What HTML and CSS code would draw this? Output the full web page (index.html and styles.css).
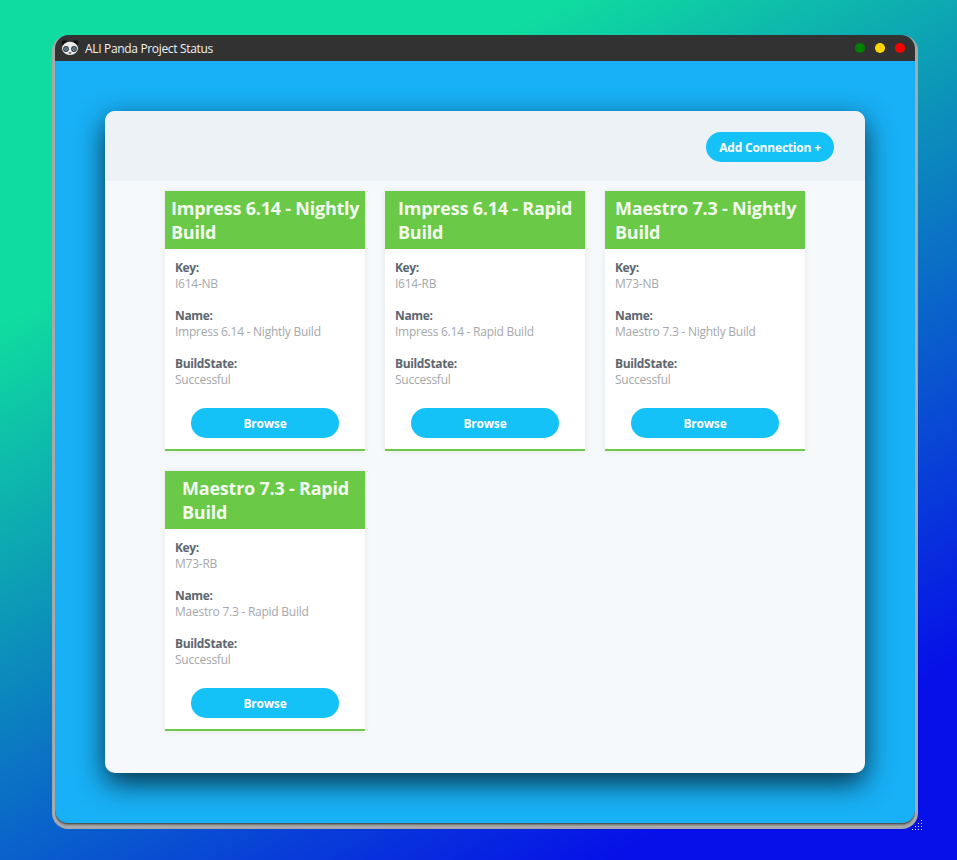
FILE: index.html
```html
<!DOCTYPE html>
<html lang="en">
<head>
    <meta charset="UTF-8">
    <meta name="viewport" content="width=device-width, initial-scale=1.0">
    <title>ALI Panda Project Status</title>
    <link rel="stylesheet" href="styles.css">
</head>
<body>

<div class="window">
    <div class="title-bar">
        <svg class="panda" width="18" height="16" viewBox="0 0 18 16">
            <circle cx="3.5" cy="3" r="2.8" fill="#111"/>
            <circle cx="14.5" cy="3" r="2.8" fill="#111"/>
            <ellipse cx="9" cy="8.3" rx="8" ry="6.6" fill="#ececec"/>
            <circle cx="5" cy="9" r="2.9" fill="#2d3a42"/>
            <circle cx="13" cy="9" r="2.9" fill="#2d3a42"/>
            <circle cx="5" cy="9" r="1.7" fill="#8fb4c8"/>
            <circle cx="13" cy="9" r="1.7" fill="#8fb4c8"/>
            <circle cx="5" cy="9" r=".8" fill="#111"/>
            <circle cx="13" cy="9" r=".8" fill="#111"/>
            <ellipse cx="9" cy="13" rx="1.5" ry=".9" fill="#777"/>
        </svg>
        <span class="window-title">ALI Panda Project Status</span>
        <div class="dots">
            <span class="dot dot-green"></span>
            <span class="dot dot-yellow"></span>
            <span class="dot dot-red"></span>
        </div>
    </div>
    <div class="window-body">
        <div class="panel">
            <div class="panel-header">
                <button class="btn btn-add" type="button">Add Connection +</button>
            </div>
            <div class="card-grid">
                <div class="card">
                    <h3 class="card-title pad-a">Impress 6.14 - Nightly Build</h3>
                    <div class="card-body">
                        <div class="field"><b>Key:</b><span>I614-NB</span></div>
                        <div class="field"><b>Name:</b><span>Impress 6.14 - Nightly Build</span></div>
                        <div class="field"><b>BuildState:</b><span>Successful</span></div>
                        <button class="btn btn-browse" type="button">Browse</button>
                    </div>
                </div>
                <div class="card">
                    <h3 class="card-title pad-b">Impress 6.14 - Rapid Build</h3>
                    <div class="card-body">
                        <div class="field"><b>Key:</b><span>I614-RB</span></div>
                        <div class="field"><b>Name:</b><span>Impress 6.14 - Rapid Build</span></div>
                        <div class="field"><b>BuildState:</b><span>Successful</span></div>
                        <button class="btn btn-browse" type="button">Browse</button>
                    </div>
                </div>
                <div class="card">
                    <h3 class="card-title pad-c">Maestro 7.3 - Nightly Build</h3>
                    <div class="card-body">
                        <div class="field"><b>Key:</b><span>M73-NB</span></div>
                        <div class="field"><b>Name:</b><span>Maestro 7.3 - Nightly Build</span></div>
                        <div class="field"><b>BuildState:</b><span>Successful</span></div>
                        <button class="btn btn-browse" type="button">Browse</button>
                    </div>
                </div>
                <div class="card">
                    <h3 class="card-title pad-d">Maestro 7.3 - Rapid Build</h3>
                    <div class="card-body">
                        <div class="field"><b>Key:</b><span>M73-RB</span></div>
                        <div class="field"><b>Name:</b><span>Maestro 7.3 - Rapid Build</span></div>
                        <div class="field"><b>BuildState:</b><span>Successful</span></div>
                        <button class="btn btn-browse" type="button">Browse</button>
                    </div>
                </div>
            </div>
        </div>
    </div>
    <svg class="grip" width="11" height="11" viewBox="0 0 11 11" fill="#dfe6f5">
        <rect x="9" y="0" width="1" height="1"/><rect x="9" y="3" width="1" height="1"/>
        <rect x="9" y="6" width="1" height="1"/><rect x="9" y="9" width="1" height="1"/>
        <rect x="6" y="3" width="1" height="1"/><rect x="6" y="6" width="1" height="1"/>
        <rect x="6" y="9" width="1" height="1"/>
        <rect x="3" y="6" width="1" height="1"/><rect x="3" y="9" width="1" height="1"/>
        <rect x="0" y="9" width="1" height="1"/>
    </svg>
</div>

</body>
</html>
```

FILE: styles.css
```css
html, body {
    height: 100%;
}
body {
    margin: 0;
    padding: 35px 39px 0 52px;
    box-sizing: border-box;
    overflow: hidden;
    background: linear-gradient(150deg, #0fdc9f 23%, #0610e8 86%);
    font-family: "Open Sans", "Noto Sans", sans-serif;
}
.window {
    position: relative;
    height: 794px;
    box-sizing: border-box;
    border: solid #a6a8aa;
    border-width: 0 3px 3px 3px;
    border-radius: 16px;
    box-shadow: inset 0 -1px 0 #9a9a9a, inset 0 -2px 0 #7c7c7c, inset 0 -3px 0 #555;
    background: #18b0f6;
    display: flex;
    flex-direction: column;
}
.title-bar {
    display: flex;
    align-items: center;
    height: 26px;
    padding: 0 10px 0 6px;
    background: #333233;
    border-radius: 14px 14px 0 0;
    flex: none;
}
.panda {
    margin-right: 6px;
}
.window-title {
    flex: 1;
    color: #f2f2f2;
    font-size: 12px;
    letter-spacing: -.33px;
}
.dots {
    display: flex;
    gap: 10px;
}
.dot {
    width: 10px;
    height: 10px;
    border-radius: 50%;
}
.dot-green { background: #008000; }
.dot-yellow { background: #ffd700; }
.dot-red { background: #ff0000; }

.window-body {
    flex: 1;
    padding: 50px;
    overflow: hidden;
}
.panel {
    width: 760px;
    height: 662px;
    background: #f5f9fc;
    border-radius: 10px;
    box-shadow: 0 10px 28px rgba(0, 0, 0, .72);
    overflow: hidden;
}
.panel-header {
    height: 70px;
    background: #edf2f7;
    display: flex;
    align-items: center;
    justify-content: flex-end;
    padding: 2px 31px 0;
    box-sizing: border-box;
}
.btn {
    border: 0;
    border-radius: 15px;
    height: 30px;
    background: #15c2f7;
    color: #fff;
    font-family: inherit;
    font-size: 12px;
    font-weight: 700;
    letter-spacing: -.2px;
}
.btn-add {
    width: 128px;
    padding: 0;
}
.card-grid {
    display: grid;
    grid-template-columns: repeat(3, 200px);
    justify-content: center;
    gap: 20px;
    padding-top: 10px;
}
.card {
    height: 260px;
    box-sizing: border-box;
    background: #fff;
    border-bottom: 2px solid #6ac947;
    box-shadow: 0 0 6px rgba(0, 0, 0, .08);
}
.card-title {
    margin: 0;
    height: 58px;
    box-sizing: border-box;
    padding-top: 6px;
    background: #6ac947;
    color: #f3fbef;
    font-size: 18px;
    line-height: 23.5px;
    font-weight: 700;
    letter-spacing: -.22px;
}
.pad-a { padding-left: 6px; }
.pad-b { padding-left: 13px; padding-right: 4px; }
.pad-c { padding-left: 10px; }
.pad-d { padding-left: 17px; padding-right: 4px; }
.card-body {
    padding: 11px 10px 0;
    display: flex;
    flex-direction: column;
}
.field {
    display: flex;
    flex-direction: column;
    margin-bottom: 16px;
    font-size: 12px;
    line-height: 16px;
}
.field b {
    color: #5c6670;
    letter-spacing: -.35px;
}
.field span {
    color: #a5a8ab;
    letter-spacing: -.25px;
}
.btn-browse {
    width: 148px;
    align-self: center;
    margin-top: 4px;
}
.grip {
    position: absolute;
    right: -8px;
    bottom: -5px;
}
```
